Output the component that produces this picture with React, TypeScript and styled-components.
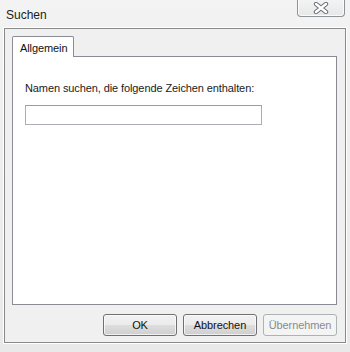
import styled, { createGlobalStyle } from "styled-components";

const GlobalStyle = createGlobalStyle`
  html, body {
    margin: 0;
    padding: 0;
    background: #ececec;
  }
  * {
    box-sizing: border-box;
  }
`;

export default function App() {
  return (
    <>
      <GlobalStyle />
      <Window>
        <TitleBar>
          <Title>Suchen</Title>
          <CloseButton>
            <svg width="16" height="12" viewBox="0 0 16 12">
              <path
                d="M3 2 L13 10 M13 2 L3 10"
                stroke="#6a6f75"
                strokeWidth="4.4"
                strokeLinecap="round"
              />
              <path
                d="M3 2 L13 10 M13 2 L3 10"
                stroke="#ffffff"
                strokeWidth="2.4"
                strokeLinecap="round"
              />
            </svg>
          </CloseButton>
        </TitleBar>

        <Client>
          <TabStrip>
            <Tab>Allgemein</Tab>
          </TabStrip>
          <Panel>
            <Label>Namen suchen, die folgende Zeichen enthalten:</Label>
            <TextInput type="text" />
          </Panel>
          <ButtonRow>
            <Button>OK</Button>
            <Button>Abbrechen</Button>
            <Button disabled>Übernehmen</Button>
          </ButtonRow>
        </Client>
        <BottomFrame />
      </Window>
    </>
  );
}

const Window = styled.div`
  width: 350px;
  height: 352px;
  display: flex;
  flex-direction: column;
  font-family: "Liberation Sans", Arial, sans-serif;
  font-size: 11px;
  letter-spacing: -0.1px;
  color: #1a1a1a;
  background: linear-gradient(to bottom, #f3f3f3, #e9e9e9);
  overflow: hidden;
`;

const TitleBar = styled.div`
  height: 28px;
  display: flex;
  align-items: flex-start;
  justify-content: space-between;
  padding: 0 5px 0 6px;
`;

const Title = styled.div`
  margin-top: 8px;
  font-size: 12px;
  letter-spacing: 0;
  color: #1c1c1c;
`;

const CloseButton = styled.div`
  width: 48px;
  height: 18px;
  margin-top: -1px;
  display: flex;
  align-items: center;
  justify-content: center;
  border: 1px solid #8e9398;
  border-top: none;
  border-radius: 0 0 4px 4px;
  background: linear-gradient(to bottom, #f4f4f4, #e6e7e8);
  box-shadow: inset 0 0 0 1px rgba(255, 255, 255, 0.8);
`;

const Client = styled.div`
  flex: 1;
  margin: 0 4px 0 4px;
  display: flex;
  flex-direction: column;
  padding: 7px 8px 6px 7px;
  background: #f0f0f0;
  border: 1px solid #8a8a8a;
  box-shadow: 0 0 0 1px #ffffff;
`;

const TabStrip = styled.div`
  display: flex;
  height: 20px;
  position: relative;
  z-index: 2;
`;

const Tab = styled.div`
  width: 62px;
  height: 21px;
  padding: 5px 0 0 7px;
  background: #ffffff;
  border: 1px solid #898c95;
  border-bottom: none;
  border-radius: 2px 2px 0 0;
  color: #111;
`;

const Panel = styled.div`
  height: 249px;
  display: flex;
  flex-direction: column;
  align-items: flex-start;
  padding: 24px 12px 0 12px;
  background: #ffffff;
  border: 1px solid #898c95;
`;

const Label = styled.div`
  line-height: 15px;
  color: #1a1a1a;
`;

const TextInput = styled.input`
  margin-top: 9px;
  width: 237px;
  height: 20px;
  padding: 0 3px;
  border: 1px solid #abadb3;
  border-top-color: #9a9ca2;
  background: #ffffff;
  outline: none;
  font-family: inherit;
  font-size: 11px;
`;

const ButtonRow = styled.div`
  display: flex;
  justify-content: flex-end;
  gap: 6px;
  margin-top: 9px;
`;

const Button = styled.button`
  width: 74px;
  height: 22px;
  padding: 0;
  font-family: inherit;
  font-size: 11px;
  letter-spacing: -0.1px;
  color: #111;
  border: 1px solid #707070;
  border-radius: 3px;
  background: linear-gradient(
    to bottom,
    #f2f2f2 0%,
    #ebebeb 50%,
    #dddddd 51%,
    #cfcfcf 100%
  );
  box-shadow: inset 0 0 0 1px rgba(255, 255, 255, 0.7);

  &:disabled {
    color: #8a8a8a;
    border-color: #adb2b5;
    background: #f4f4f4;
    box-shadow: none;
  }
`;

const BottomFrame = styled.div`
  height: 9px;
`;
